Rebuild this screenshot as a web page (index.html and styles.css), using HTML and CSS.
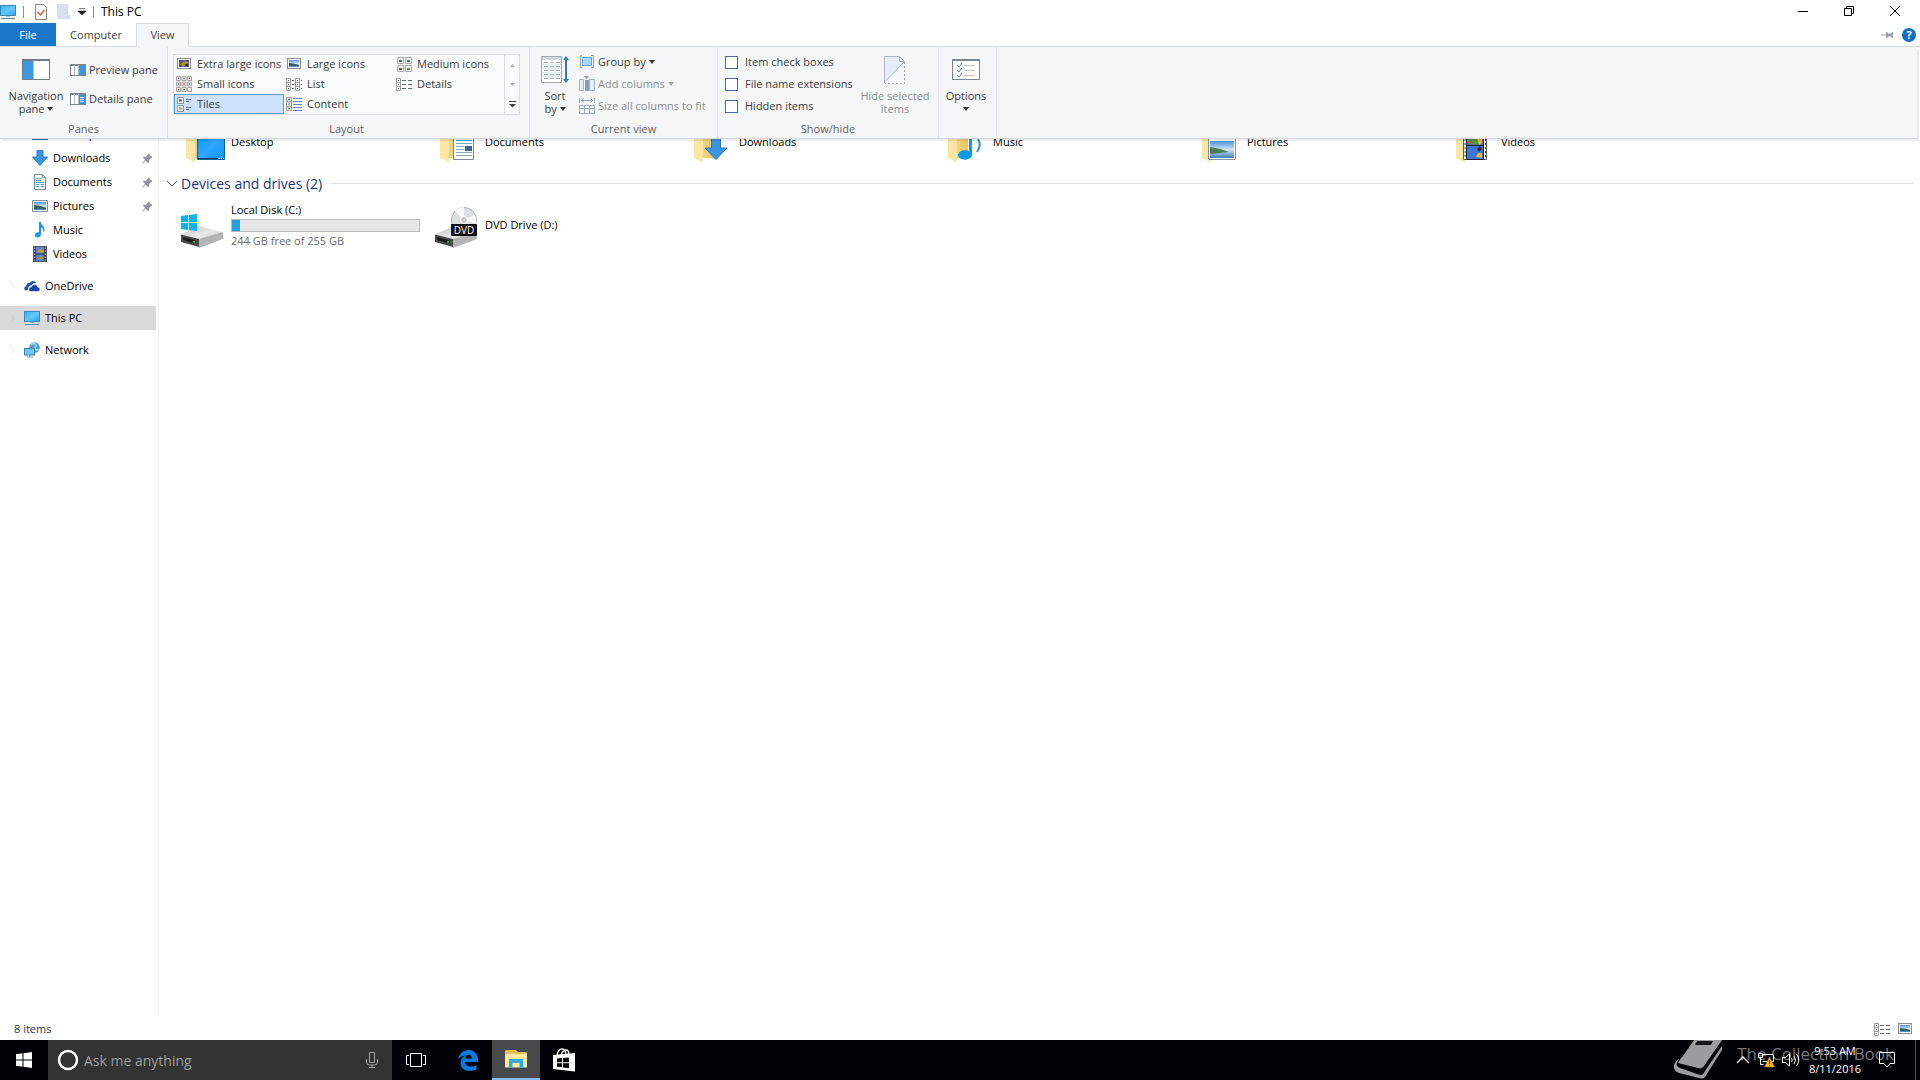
FILE: index.html
```html
<!DOCTYPE html>
<html lang="en">
<head>
<meta charset="utf-8">
<title>This PC</title>
<link rel="stylesheet" href="styles.css">
</head>
<body>
<svg class="defs" width="0" height="0" aria-hidden="true">
  <defs>
    <linearGradient id="g-screen" x1="0" y1="0" x2="1" y2="1"><stop offset="0" stop-color="#39b0f2"/><stop offset=".5" stop-color="#63c8fa"/><stop offset="1" stop-color="#2ba3ee"/></linearGradient>
    <linearGradient id="g-desk" x1="0" y1="0" x2="1" y2="1"><stop offset="0" stop-color="#0a93f8"/><stop offset=".5" stop-color="#2fa8fd"/><stop offset="1" stop-color="#0b90f5"/></linearGradient>
    <linearGradient id="g-fold" x1="0" y1="0" x2="1" y2="0"><stop offset="0" stop-color="#fbe29a"/><stop offset="1" stop-color="#e9c55f"/></linearGradient>
    <linearGradient id="g-sky" x1="0" y1="0" x2="0" y2="1"><stop offset="0" stop-color="#4a8fe0"/><stop offset=".5" stop-color="#cfe6f8"/><stop offset="1" stop-color="#3f7fb4"/></linearGradient>
    <linearGradient id="g-top" x1="0" y1="0" x2="1" y2="1"><stop offset="0" stop-color="#c4c4c4"/><stop offset=".5" stop-color="#e8e8e8"/><stop offset="1" stop-color="#c2c2c2"/></linearGradient>
    <symbol id="pc" viewBox="0 0 16 16"><rect x=".5" y="1.5" width="15" height="10" fill="url(#g-screen)" stroke="#3a86b5"/><path d="M6 12h4v1H6z" fill="#8ecdf0"/><path d="M1 14.5h14" stroke="#5d93b3"/></symbol>
    <symbol id="desk" viewBox="0 0 16 16"><rect x=".5" y="2.500" width="15" height="11" fill="#1a97ee" stroke="#1b6fb0"/></symbol>
    <symbol id="down" viewBox="0 0 16 16"><path d="M5 .5h6V7h4.500L8 15.500.5 7H5z" fill="#3c96e2" stroke="#2b7cc4"/></symbol>
    <symbol id="doc" viewBox="0 0 16 16"><path d="M2.500.5h8l3 3v12h-11z" fill="#fff" stroke="#7b8894"/><path d="M10.500.5v3h3" fill="none" stroke="#7b8894"/><path d="M4 4.500h2M7 4.500h2M4 6.500h5M4 8.500h8M4 10.500h3M9 10.500h3M4 12.500h3M9 12.500h3" stroke="#39a0d4"/></symbol>
    <symbol id="pic" viewBox="0 0 16 16"><rect x=".5" y="2.500" width="15" height="11" fill="#fff" stroke="#8b959c"/><path d="M2 4h12v8H2z" fill="url(#g-sky)"/><path d="M2 7q5 0 12 3v1H2z" fill="#35655f"/></symbol>
    <symbol id="music" viewBox="0 0 16 16"><path d="M7 0h2c0 3 4 4 3.500 8-.2 1.500-1 2-1.300 2.500C12 7.500 10.500 6 9 5.500V12c0 2-1.600 3.500-3.500 3.500S3 14.500 3 13c0-2 2-3.200 4-2.700z" fill="#1a97ea"/></symbol>
    <symbol id="film" viewBox="0 0 16 16"><rect x="1.500" y=".5" width="13" height="15" fill="#2d3140" stroke="#555a62"/><path d="M4 1h8v6.500H4z" fill="#6f7fd0"/><path d="M4 8.500h8V15H4z" fill="#5581cf"/><path d="M5 5l3-2 4 1v2l-4 1z" fill="#b8a03a"/><path d="M6 12l4-3 1 4-3 1z" fill="#a89038"/><path d="M2.800 1.500v13M13.200 1.500v13" stroke="#e6e6e6" stroke-dasharray="1.500 1.500"/></symbol>
    <symbol id="cloud" viewBox="0 0 16 16"><path d="M1.800 12.500C-.6 11.500.2 8.500 2.200 8.300 2 5.500 4.500 4.600 5.800 5.200 7.200 2.300 11 2.200 12 5 9 4.500 8 6.500 7.800 7.200 5.500 7 3.600 9 4.200 11.500z" fill="#1a4fae"/><path d="M6.400 13.500C4 13 4.200 9 7.300 9c1-3 5.500-3.500 6.300 0 3.200.2 3 4.300.4 4.500z" fill="#1447a0" stroke="#fff" stroke-width=".6"/></symbol>
    <symbol id="net" viewBox="0 0 16 16"><circle cx="10.500" cy="5.500" r="5.200" fill="#4f9cc8"/><path d="M7 3c2-2 4-2 5 0s-2 2-1 4 3 0 4 1" fill="none" stroke="#a9dcf2" stroke-width="1.500"/><rect x=".5" y="6.500" width="10" height="6.500" fill="#6cc7f5" stroke="#3b83ad"/><path d="M3 15h6M5.500 13v2" stroke="#5aa3c9"/></symbol>
    <symbol id="pin" viewBox="0 0 12 12"><path d="M7 .5L11.500 5l-1 .8-.8-.3L7.500 8l.2 2L6.500 11 4 8.500.5 11.500 0 11l3.300-3.500L1 5l1-1 2.200.2L6.500 2l-.3-.8z" fill="#8c959b"/></symbol>
    <symbol id="pane-r" viewBox="0 0 16 12"><rect x=".5" y=".5" width="15" height="11" fill="#fff" stroke="#7c868e"/><path d="M.5 1.500h15" stroke="#7c868e"/><path d="M9 2h6v9H9z" fill="#3d95df"/><path d="M4.500 1v10M8.500 1v10" stroke="#b4bac0"/></symbol>
    <symbol id="pane-d" viewBox="0 0 16 12"><rect x=".5" y=".5" width="15" height="11" fill="#fff" stroke="#7c868e"/><path d="M.5 1.500h15" stroke="#7c868e"/><path d="M9 2h6v9H9z" fill="#3d95df"/><path d="M10 4.500h4M10 6.500h4M10 8.500h4" stroke="#d6ebfb"/><path d="M4.500 1v10M8.500 1v10" stroke="#b4bac0"/></symbol>
    <symbol id="xl" viewBox="0 0 16 16"><rect x="1.500" y="2.500" width="13" height="10" fill="#fff" stroke="#8a8f94"/><path d="M3 4h10v7H3z" fill="#54508c"/><path d="M4 8l4-3 4 1v3l-5 2z" fill="#a49426"/><path d="M9 8h3v2H9z" fill="#31301d"/></symbol>
    <symbol id="lg" viewBox="0 0 16 16"><rect x="1.500" y="2.500" width="13" height="10" fill="#fff" stroke="#8a8f94"/><path d="M3 4h10v7H3z" fill="url(#g-sky)"/><path d="M3 7q4 0 10 2v1H3z" fill="#2f5f6f"/></symbol>
    <symbol id="md" viewBox="0 0 16 16"><path d="M1.500 1.500h6v6h-6zM9.500 1.500h6v6h-6zM1.500 9.500h6v6h-6zM9.500 9.500h6v6h-6z" fill="#fff" stroke="#a8a8ab"/><path d="M3 4h3v2H3z" fill="#43675f"/><path d="M11 4h3v2h-3z" fill="#49629b"/><path d="M3 12h3v2H3z" fill="#a4432f"/><path d="M11 12h3v2h-3z" fill="#888032"/></symbol>
    <symbol id="sm" viewBox="0 0 16 16"><path d="M.5.5h4v4h-4zM6 .5h4v4H6zM11.500.5h4v4h-4zM.5 6h4v4h-4zM6 6h4v4H6zM11.500 6h4v4h-4zM.5 11.500h4v4h-4zM6 11.500h4v4H6zM11.500 11.500h4v4h-4z" fill="#fff" stroke="#a5a19c"/><path d="M2 2h1v1H2zM7.500 2h1v1h-1zM2 7.500h1v1H2zM13 7.500h1v1h-1zM7.500 13h1v1h-1z" fill="#33566a" stroke="#33566a" stroke-width=".5"/><path d="M13 2h1v1h-1zM7.500 7.500h1v1h-1zM2 13h1v1H2z" fill="#b03a30" stroke="#b03a30" stroke-width=".5"/></symbol>
    <symbol id="list" viewBox="0 0 16 16"><path d="M.5 2.500h4v12h-4zM.5 6.500h4M.5 10.500h4M9.500 2.500h4v12h-4zM9.500 6.500h4M9.500 10.500h4" fill="#fff" stroke="#9b9b9b"/><path d="M2 4.500h1M2 8.500h1M2 12.500h1M6 4.500h2M6 8.500h2M6 12.500h2M11 4.500h1M11 8.500h1M11 12.500h1M15 4.500h1M15 8.500h1M15 12.500h1" stroke="#4b5f70"/></symbol>
    <symbol id="det" viewBox="0 0 16 16"><path d="M.5 2.500h4v12h-4zM.5 6.500h4M.5 10.500h4" fill="#fff" stroke="#9b9b9b"/><path d="M2 4.500h1M2 8.500h1M2 12.500h1M6 4.500h4M6 8.500h4M6 12.500h4M12 4.500h4M12 8.500h4M12 12.500h4" stroke="#5b6b7a"/></symbol>
    <symbol id="tile" viewBox="0 0 16 16"><path d="M1.500 1.500h6v6h-6zM1.500 9.500h6v6h-6z" fill="#fff" stroke="#90959b"/><path d="M3 3.500h3v2H3z" fill="#38627c"/><path d="M3 11.500h3v2H3z" fill="#a38d48"/><path d="M10 3.500h5M10 5.500h3M10 11.500h5M10 13.500h3" stroke="#5d7085"/></symbol>
    <symbol id="cont" viewBox="0 0 16 16"><path d="M.5 1.500h5v13h-5zM.5 5.500h5M.5 10.500h5" fill="#fff" stroke="#9b9b9b"/><path d="M2 3.500h2M2 8h2M2 12.500h2" stroke="#416054"/><path d="M7 2.500h9M7 5.500h9M7 8.500h9M7 11.500h9M7 14.500h9" stroke="#5d8ac2"/></symbol>
    <symbol id="fold" viewBox="0 0 48 48"><path d="M4 2h20v32H13z" fill="url(#g-fold)"/><path d="M4 2l9 5v31.500L4 34z" fill="#fbe5a2"/></symbol>
    <symbol id="drive" viewBox="0 0 48 48"><path d="M4 27.500L22 19l24 6-17 11z" fill="url(#g-top)"/><path d="M4 27.500L22 32v8L4 35z" fill="#4a4a4a"/><path d="M6 30l13 3.500v3L6 33z" fill="#1d1d1d"/><path d="M22 32l24-7v7l-24 9z" fill="#b4b4b4"/><path d="M16 34h2v1.500h-2z" fill="#48d152"/></symbol>
  </defs>
</svg>
<div class="screen">
  <main class="window">
    <header class="titlebar">
      <div class="quick">
        <svg class="i16"><use href="#pc"/></svg>
        <span class="bar"></span>
        <button class="plain q1" aria-label="Properties"><svg width="12" height="16" viewBox="0 0 12 16"><path d="M.5.5h8l3 3v12H.5z" fill="#fff" stroke="#8d8580"/><path d="M2.500 8l3 3L9.500 6" fill="none" stroke="#dc5a28" stroke-width="1.500"/></svg></button>
        <button class="plain q2" aria-label="New folder"><svg width="13" height="16" viewBox="0 0 13 16"><path d="M0 0h11v11h2v4H0z" fill="#d5dff0"/></svg></button>
        <button class="plain q3" aria-label="Customize toolbar"><svg width="8" height="8" viewBox="0 0 8 8"><path d="M1 .5h6M0 3h8L4 7z" fill="#222" stroke="#222" stroke-width=".6"/></svg></button>
        <span class="bar"></span>
      </div>
      <h1>This PC</h1>
      <div class="caption">
        <button class="plain" aria-label="Minimize"><svg width="10" height="10"><path d="M0 5.500h10" stroke="#000"/></svg></button>
        <button class="plain" aria-label="Restore"><svg width="10" height="10" fill="none" stroke="#000"><path d="M.5 2.500h7v7h-7zM2.500 2V.5h7v7H8"/></svg></button>
        <button class="plain" aria-label="Close"><svg width="10" height="10"><path d="M0 0l10 10M10 0L0 10" stroke="#000"/></svg></button>
      </div>
    </header>
    <nav class="tabs">
      <button class="tab file">File</button>
      <button class="tab computer">Computer</button>
      <button class="tab view">View</button>
      <div class="tabtools">
        <button class="plain" aria-label="Pin the ribbon"><svg width="12" height="8" viewBox="0 0 12 8"><path d="M0 4h5" stroke="#9aa0a5"/><path d="M5 1h1l1 1.500h3L11 1h1v6h-1l-1-1.500H7L6 7H5z" fill="#9aa0a5"/></svg></button>
        <button class="plain help" aria-label="Help">?</button>
      </div>
    </nav>

    <section class="ribbon" aria-label="View">
      <div class="group panes">
        <div class="tools">
          <button class="big"><svg width="28" height="21" viewBox="0 0 28 21"><rect x=".5" y=".5" width="27" height="20" fill="#fff" stroke="#727d85"/><path d="M1 2h10v18H1z" fill="#3c97e0"/><path d="M0 1.500h28" stroke="#727d85"/><path d="M11.500 2v18" stroke="#a9c3d6"/></svg><span>Navigation<br>pane <i class="arr"></i></span></button>
          <div class="stack">
            <button class="small"><svg width="16" height="12"><use href="#pane-r"/></svg>Preview pane</button>
            <button class="small"><svg width="16" height="12"><use href="#pane-d"/></svg>Details pane</button>
          </div>
        </div>
        <h2>Panes</h2>
      </div>
      <div class="group layout">
        <div class="tools">
          <div class="gallery">
            <div class="options">
              <button><svg class="i16"><use href="#xl"/></svg>Extra large icons</button>
              <button><svg class="i16"><use href="#lg"/></svg>Large icons</button>
              <button><svg class="i16"><use href="#md"/></svg>Medium icons</button>
              <button><svg class="i16"><use href="#sm"/></svg>Small icons</button>
              <button><svg class="i16"><use href="#list"/></svg>List</button>
              <button><svg class="i16"><use href="#det"/></svg>Details</button>
              <button class="on"><svg class="i16"><use href="#tile"/></svg>Tiles</button>
              <button><svg class="i16"><use href="#cont"/></svg>Content</button>
            </div>
            <div class="spin">
              <button aria-label="Up"><svg width="7" height="4"><path d="M1 4h5L3.500 1z" fill="#a9adb2"/></svg></button>
              <button aria-label="Down"><svg width="7" height="4"><path d="M1 0h5L3.500 3z" fill="#a9adb2"/></svg></button>
              <button aria-label="More"><svg width="7" height="7"><path d="M0 0h7v1H0zM0 3h7L3.500 6.500z" fill="#444"/></svg></button>
            </div>
          </div>
        </div>
        <h2>Layout</h2>
      </div>
      <div class="group current">
        <div class="tools">
          <button class="big"><svg width="28" height="28" viewBox="0 0 28 28"><path d="M.5.5h20v26H.5z" fill="#fff" stroke="#a0a7ad"/><path d="M1 1h19v3H1z" fill="#cfd8e0"/><path d="M3 6.500h16M3 10.500h16M3 14.500h16M3 18.500h16M3 22.500h16" stroke="#9aa7b3" stroke-dasharray="4 2"/><path d="M1 8.500h19M1 12.500h19M1 16.500h19M1 20.500h19" stroke="#dde9f2"/><path d="M25 3v21" stroke="#2f7db8" stroke-width="2"/><path d="M22 4l3-4 3 4zM22 23l3 4 3-4z" fill="#2f7db8"/></svg><span>Sort<br>by <i class="arr"></i></span></button>
          <div class="stack">
            <button class="small"><svg width="16" height="16"><path d="M3 1.500H1.500v12H3M12 1.500h2.500v12H12" fill="none" stroke="#9aa0a6"/><path d="M3.500 3.500h9v8h-9z" fill="#a7d8f8" stroke="#62a6d6"/></svg>Group by <i class="arr"></i></button>
            <button class="small" disabled><svg width="16" height="16"><path d="M.5 3.500h4v11h-4zM10.500 3.500h5v11h-5z" fill="#e7edf7" stroke="#a3b0cb"/><path d="M6 4h4v11H6z" fill="#8b99b3"/><path d="M5 0h5L7.500 3z" fill="#8b99b3"/></svg>Add columns <i class="arr"></i></button>
            <button class="small" disabled><svg width="16" height="16" fill="none" stroke="#9aa8c6"><path d="M.5 0v5M15.500 0v5M2 2.500h12M4.500.5l-2 2 2 2M11.500.5l2 2-2 2M.5 7.500h15v8H.5zM.5 10.500h15M5.500 8v7M10.500 8v7"/></svg>Size all columns to fit</button>
          </div>
        </div>
        <h2>Current view</h2>
      </div>
      <div class="group show">
        <div class="tools">
          <div class="stack">
            <label><input type="checkbox">Item check boxes</label>
            <label><input type="checkbox">File name extensions</label>
            <label><input type="checkbox">Hidden items</label>
          </div>
          <button class="big" disabled><svg width="22" height="28" viewBox="0 0 22 28"><path d="M.5.5h15l5 5v1L1 26.500H.5z" fill="#e6edf8"/><path d="M.5 27V.5h15l5 5L.5 26M15.500.5v5h5" fill="none" stroke="#a9b6d1"/><path d="M20.500 6v21.500H1" fill="none" stroke="#9faabf" stroke-dasharray="2 2"/></svg><span>Hide selected<br>items</span></button>
        </div>
        <h2>Show/hide</h2>
      </div>
      <div class="group opts">
        <div class="tools">
          <button class="big"><svg width="28" height="21" viewBox="0 0 28 21"><rect x=".5" y=".5" width="27" height="20" fill="#fff" stroke="#7c868e"/><path d="M0 1.500h28" stroke="#7c868e"/><path d="M5 6l2 2 3-4M5 11l2 2 3-4M5 16l2 2 3-4" fill="none" stroke="#4a86c8"/><path d="M12 6.500h11M12 11.500h11M12 16.500h11" stroke="#c9c4bd"/></svg><span>Options<br><i class="arr"></i></span></button>
        </div>
      </div>
    </section>

    <div class="explorer">
      <nav class="side">
        <a class="sub" href="#desktop"><svg class="i16"><use href="#desk"/></svg>Desktop</a>
        <a class="sub" href="#downloads"><svg class="i16"><use href="#down"/></svg>Downloads<svg class="pin"><use href="#pin"/></svg></a>
        <a class="sub" href="#documents"><svg class="i16"><use href="#doc"/></svg>Documents<svg class="pin"><use href="#pin"/></svg></a>
        <a class="sub" href="#pictures"><svg class="i16"><use href="#pic"/></svg>Pictures<svg class="pin"><use href="#pin"/></svg></a>
        <a class="sub" href="#music"><svg class="i16"><use href="#music"/></svg>Music</a>
        <a class="sub" href="#videos"><svg class="i16"><use href="#film"/></svg>Videos</a>
        <a class="root" href="#onedrive"><svg class="exp"><path d="M1 1l3 3-3 3"/></svg><svg class="i16"><use href="#cloud"/></svg>OneDrive</a>
        <a class="root here" href="#thispc"><svg class="exp"><path d="M1 1l3 3-3 3"/></svg><svg class="i16"><use href="#pc"/></svg>This PC</a>
        <a class="root" href="#network"><svg class="exp"><path d="M1 1l3 3-3 3"/></svg><svg class="i16"><use href="#net"/></svg>Network</a>
      </nav>
      <section class="files">
        <div class="tiles">
          <a class="tile" href="#f1"><svg class="i48"><use href="#fold" x="5"/><path d="M20.500 10.500h27v25h-27z" fill="url(#g-desk)" stroke="#0d5f9e"/><path d="M21 34.500h20" stroke="#123f66"/><path d="M42 34.500h5" stroke="#fff" stroke-dasharray="1 1"/></svg>Desktop</a>
          <a class="tile" href="#f2"><svg class="i48"><use href="#fold" x="5"/><path d="M22.500 4.500h20v31h-20z" fill="#fff" stroke="#7d8790"/><path d="M25 16.500h16" stroke="#2e9fd4"/><path d="M25 19.500h16M25 22.500h8M25 25.500h8M25 28.500h16M25 31.500h16" stroke="#84a9bd"/><path d="M34 22h7v5h-7z" fill="#37668c"/></svg>Documents</a>
          <a class="tile" href="#f3"><svg class="i48"><use href="#fold" x="5"/><path d="M26.500 8.500h9V24H42L31 35.500 20 24h6.500z" fill="#3a95e4" stroke="#2a78c0"/></svg>Downloads</a>
          <a class="tile" href="#f4"><svg class="i48"><use href="#fold" x="5"/><ellipse cx="26" cy="31" rx="7" ry="4.700" fill="#0b9ae8"/><path d="M31.500 6v25" stroke="#0b9ae8" stroke-width="3"/><path d="M39 15q4 6-1 13" fill="none" stroke="#2b97d0" stroke-width="2"/></svg>Music</a>
          <a class="tile" href="#f5"><svg class="i48"><use href="#fold" x="5"/><path d="M15.500 14.500h27v21h-27z" fill="#fff" stroke="#82949f"/><path d="M17 17h24v17H17z" fill="url(#g-sky)"/><path d="M17 23q10 1 19 5l-19 2z" fill="#4b7f55"/></svg>Pictures</a>
          <a class="tile" href="#f6"><svg class="i48"><use href="#fold" x="5"/><path d="M16.500 6.500h23v29h-23z" fill="#fff" stroke="#5a5a5a"/><path d="M19 6h18v30H19z" fill="#20242e"/><path d="M20 6h16v15H20z" fill="#5a67b8"/><path d="M20 22h16v13H20z" fill="#3f75da"/><path d="M20 16l5-3 5 2 5-2v6l-8 2-7-2z" fill="#4e9a3e"/><path d="M21 19l3-3 2 3z" fill="#e23d5a"/><path d="M30 14h5v5l-3 2z" fill="#e4bb20"/><path d="M30 25l3-3 2 3-3 3z" fill="#3a2618"/><path d="M29 33l2-4h4v5z" fill="#e9b71e"/><path d="M18 7v28M38.500 7v28" stroke="#444" stroke-dasharray="2 2"/></svg>Videos</a>
        </div>
        <h2 class="section"><svg width="12" height="8"><path d="M1 1l5 5 5-5" fill="none" stroke="#6b6b6b"/></svg>Devices and drives (2)</h2>
        <div class="tiles">
          <a class="tile" href="#c"><svg class="i48"><use href="#drive"/><path d="M4 9l7-1v7H4zM12 8l8-1v8h-8zM4 16h7v7l-7-1zM12 16h8v8l-8-1z" fill="#00b4ef"/></svg><span class="info"><span>Local Disk (C:)</span><span class="meter"><span class="used" style="width:4.3%"></span></span><span class="free">244 GB free of 255 GB</span></span></a>
          <a class="tile" href="#d"><svg class="i48"><use href="#drive"/><circle cx="33" cy="13" r="12.500" fill="#dcdfdf" stroke="#a8aaaa"/><path d="M33 13L24 4q4-4 9-4zM33 13l11-5q2 4 1 9z" fill="#f7f9f9"/><circle cx="33" cy="13" r="3.500" fill="#c9cbcb" stroke="#fff"/><rect x="20" y="17" width="26" height="12" rx="1" fill="#111"/><text x="33" y="27" text-anchor="middle" class="dvd">DVD</text></svg>DVD Drive (D:)</a>
        </div>
      </section>
    </div>
    <footer class="status"><span>8 items</span>
      <div class="modes">
        <button class="plain" aria-label="Details view"><svg class="i16"><use href="#det"/></svg></button>
        <button class="plain" aria-label="Large icons view"><svg class="i16"><use href="#lg"/></svg></button>
      </div>
    </footer>
  </main>

  <div class="taskbar">
    <button class="task" aria-label="Start"><svg width="16" height="16"><path d="M0 2.300L6.500 1.300v6.200H0zM7.500 1.200L16 0v7.500H7.500zM0 8.500h6.500v6.200L0 13.700zM7.500 8.500H16V16l-8.500-1.200z" fill="#fff"/></svg></button>
    <label class="search"><svg width="22" height="22"><circle cx="11" cy="11" r="9" fill="none" stroke="#fff" stroke-width="2.500"/></svg><input type="text" placeholder="Ask me anything" aria-label="Search"><svg width="12" height="16" fill="none" stroke="#a5a5a5"><path d="M3.500.5h5v10h-5zM.5 7v3q0 3 3 3h5q3 0 3-3V7M6 13v2.500M3 15.500h6"/></svg></label>
    <button class="task tview" aria-label="Task view"><svg width="20" height="14" fill="none" stroke="#fff"><path d="M4.500.5h11v13h-11zM3 2.500H.5v9H3M17 2.500h2.500v9H17"/></svg></button>
    <button class="task" aria-label="Edge"><svg width="20" height="21" viewBox="0 0 20 21"><path d="M0 9.500C1 4 5 0 10.500 0 16.500 0 20 4.500 20 9.500V12H7c.2 3 3 4.600 6 4.600 2.200 0 4-.6 5.600-1.600v4.300C17 20.300 14.500 21 12 21 6.500 21 2.600 17.800 2.600 13c0-3.300 1.800-6 4.800-7.500C4.500 5.700 1.800 7 0 9.500zM7.200 8.400h6.600c0-2.300-1.100-3.600-3.100-3.600-2 0-3.200 1.500-3.500 3.600z" fill="#0a7bdc"/></svg></button>
    <button class="task active" aria-label="File Explorer"><svg width="22" height="18"><path d="M0 1q0-1 1-1h10l2 2h8q1 0 1 1v14H0z" fill="#e4bd57"/><path d="M0 4h22v13.500H0z" fill="#fde9a1"/><path d="M4 18V9h14v9h-3.500v-5h-7v5z" fill="#36a9dc"/></svg></button>
    <button class="task" aria-label="Store"><svg width="22" height="24"><path d="M4 7.500Q5 1 9 1t4 6M8 7q2-5 5-5t3 5" fill="none" stroke="#fff" stroke-width="1.300"/><path d="M0 7l22-2v18.500L0 21z" fill="#fff"/><path d="M4 10.500l5-.4v4.200H4zM10 10l6-.6v4.900h-6zM4 15.300h5v4l-5-.5zM10 15.300h6v4.900l-6-.7z" fill="#05060a"/></svg></button>
    <div class="tray">
      <svg width="14" height="10" fill="none" stroke="#fff" stroke-width="1.300"><path d="M1 8l6-6 6 6"/></svg>
      <svg width="18" height="16"><path d="M5.500 2.500h11v7h-11M11 10v3M1.500 1.500h4v4h-4zM3.500 6v6.500h3" fill="none" stroke="#fff"/><path d="M12.500 5L17.500 15h-10z" fill="#fcb716" stroke="#d18a00" stroke-width=".5"/><path d="M12.500 8v4M12.500 13v1" stroke="#222"/></svg>
      <svg width="18" height="14" fill="none" stroke="#fff"><path d="M.5 4.500h3L7.500 1v12L3.500 9.500h-3zM9.500 5q1.500 2 0 4M12 3q3 4 0 8M14.500 1q4.500 6 0 12"/></svg>
      <time>9:53 AM<br>8/11/2016</time>
      <svg class="action" width="16" height="16" fill="none" stroke="#fff"><path d="M.5.5h15v11H11L8 15l-3-3.500H.5z"/></svg>
    </div>
    <div class="peek"></div>
    <div class="mark"><svg width="50" height="40" viewBox="0 0 50 40"><path d="M20 0h28l-18 26q-2 3-5 2.300L4 23q2-4 5-7z" fill="#9b9ca0"/><path d="M23 1h16l-2 4H21z" fill="#15161a"/><path d="M5 19q-5 7 1 9l20 7q2 .5 3-1L48 6v4L31 37q-1 2-4 1.500L5 33q-6-2-5-8 2-5 5-6z" fill="#9b9ca0"/></svg><span>The Collection Book</span></div>
  </div>
</div>
</body>
</html>
```
FILE: styles.css
```css
* { box-sizing: border-box; }
body {
  margin: 0;
  font: 11px/16px "Open Sans", "Noto Sans", sans-serif;
  color: #000;
  background: #fff;
  overflow: hidden;
}
button { font: inherit; color: inherit; background: none; border: 0; padding: 0; margin: 0; }
a { color: inherit; text-decoration: none; }
h1, h2 { margin: 0; font-weight: 400; }
svg { flex: none; display: block; }
.defs { position: absolute; }
.i16 { width: 16px; height: 16px; }
.i48 { width: 48px; height: 48px; }
.plain { display: grid; place-items: center; }

.screen { display: flex; flex-direction: column; height: 100vh; }
.window { position: relative; flex: 1; min-height: 0; display: flex; flex-direction: column; }

.titlebar { display: flex; height: 23px; align-items: center; }
.quick { display: flex; align-items: center; }
.bar { width: 1px; height: 12px; background: #8f8f8f; margin: 0 11px 0 7px; }
.q1 { margin-right: 10px; }
.q2 { margin-right: 8px; }
.quick .bar:last-child { margin-right: 7px; }
.titlebar h1 { font-size: 12px; }
.caption { margin-left: auto; align-self: stretch; display: flex; padding-right: 2px; }
.caption button { width: 46px; padding-bottom: 2px; }

.tabs { display: flex; height: 24px; border-bottom: 1px solid #d9dce0; color: #444; }
.tab { height: 24px; text-align: center; padding-bottom: 1px; }
.file { width: 56px; height: 23px; background: #1976c8; color: #fff; padding: 0; }
.computer { width: 80px; }
.view { width: 53px; border: 1px solid #d9dce0; border-bottom: 0; background: #f4f6f8; padding-bottom: 2px; }
.tabtools { margin-left: auto; display: flex; align-items: center; gap: 9px; padding-right: 4px; }
.help { width: 14px; height: 14px; border-radius: 50%; background: #0f6fc6; color: #fff; font-weight: 700; line-height: 14px; }

/* The ribbon drops down over the folder view */
.ribbon {
  position: absolute; top: 47px; left: 0; right: 3px; z-index: 2;
  display: flex; height: 92px;
  background: #f4f6f8; border-bottom: 1px solid #d5d8dc;
  box-shadow: 2px 2px 0 rgba(0, 0, 0, .08);
  color: #3c3c3c;
}
.group { display: flex; flex-direction: column; border-right: 1px solid #e1e4e7; }
.tools { flex: 1; display: flex; align-items: flex-start; padding-top: 4px; }
.group h2 { font-size: 11px; line-height: 18px; text-align: center; color: #5f5f5f; }
.panes { width: 168px; }
.layout { width: 362px; padding: 0 9px 0 5px; }
.current { width: 188px; }
.show { width: 221px; }
.opts { width: 58px; }
.big { width: 64px; display: flex; flex-direction: column; align-items: center; line-height: 13px; padding-top: 2px; }
.big svg[height="21"] { margin: 6px 0 9px; }
.big svg[height="28"] { margin: 3px 0 5px; }
.panes .big { margin: 0 2px 0 4px; }
.current .big { width: 40px; margin: 0 4px 0 5px; }
.show .big { width: 76px; }
.opts .big { width: 54px; }
.arr { display: inline-block; border: 3px solid transparent; border-top: 4px solid #333; border-bottom: 0; vertical-align: 2px; }
.small { display: flex; align-items: center; gap: 3px; height: 22px; white-space: nowrap; }
.panes .stack { padding-top: 4px; }
.panes .small { height: 29px; }
button:disabled { color: #8f8f8f; }
button:disabled .arr { border-top-color: #a5a5a5; }
.gallery { display: flex; margin-top: 3px; width: 347px; height: 61px; border: 1px solid #dcdfe2; background: #f9fafb; }
.options { flex: 1; display: grid; grid-template-columns: repeat(3, 110px); grid-template-rows: 18px 21px 20px; align-items: stretch; }
.options button { display: flex; align-items: center; gap: 5px; padding-left: 2px; white-space: nowrap; }
.options .on { background: #cce2fb; outline: 1px solid #5e9ad8; outline-offset: -1px; }
.spin { width: 15px; border-left: 1px solid #dcdfe2; display: grid; grid-template-rows: 20px 20px 1fr; }
.spin button { display: grid; place-items: center; }
.show .stack { padding-left: 7px; width: 139px; }
.show label { display: flex; align-items: center; gap: 7px; height: 22px; white-space: nowrap; }
.show input { appearance: none; margin: 0; width: 13px; height: 13px; border: 1px solid #52689c; background: #fff; }

.explorer { flex: 1; min-height: 0; display: flex; }
.side { width: 159px; padding: 75px 2px 0 0; border-right: 1px solid #eff1f3; }
.side a { display: flex; align-items: center; height: 24px; gap: 5px; }
.side .sub { padding: 0 3px 0 32px; }
.side .root { margin-top: 8px; padding-left: 10px; }
.side .here { background: #d9d9d9; }
.pin { width: 11px; height: 11px; margin-left: auto; }
.exp { width: 5px; height: 8px; margin-right: 4px; fill: none; stroke: #e9e9e9; }
.here .exp { stroke: #cbcbcb; }
.files { flex: 1; min-width: 0; padding: 66px 7px 0 7px; }
.tiles { display: grid; grid-template-columns: repeat(auto-fill, 254px); padding-left: 11px; }
.tile { display: flex; align-items: center; gap: 6px; height: 58px; }
.tile .i48 { margin-top: 12px; }
.info { display: flex; flex-direction: column; width: 189px; }
.meter { height: 13px; border: 1px solid #bcbcbc; background: #e6e6e6; margin: 1px 0; }
.used { display: block; height: 100%; background: #26a0da; }
.free { color: #6d6d6d; }
.section { display: flex; align-items: center; gap: 4px; height: 25px; font-size: 14px; color: #1e3287; }
.section svg { margin-right: -1px; }
.section::after { content: ""; flex: 1; height: 1px; background: #e2e2e2; margin-left: 4px; }
.dvd { font: 10px "Open Sans", sans-serif; fill: #fff; }

.status { height: 24px; display: flex; align-items: center; justify-content: space-between; padding: 1px 7px 0 14px; color: #1e395b; }
.modes { display: flex; gap: 7px; }

.taskbar { position: relative; height: 40px; display: flex; background: #010308; color: #fff; }
.task { width: 48px; display: grid; place-items: center; }
.tview { margin-right: 4px; }
.active { background: #47494d; border-bottom: 2px solid #83b9e8; }
.search { width: 344px; background: #333; display: flex; align-items: center; padding: 0 14px 0 9px; gap: 5px; }
.search input { flex: 1; min-width: 0; border: 0; padding: 2px 0 0; background: none; color: #fff; font: 14px/20px "Open Sans", sans-serif; }
.search input::placeholder { color: #9d9d9d; opacity: 1; }
.tray { position: relative; z-index: 1; margin-left: auto; display: flex; align-items: center; gap: 7px; }
.tray time { width: 54px; margin-left: 1px; text-align: center; line-height: 18px; }
.action { margin: 0 20px 0 10px; }
.peek { width: 5px; border-left: 1px solid #4c4d50; }
/* Watermark laid over the taskbar */
.mark { position: absolute; right: 26px; top: 0; display: flex; color: #77787c; font-size: 17px; line-height: 28px; gap: 13px; pointer-events: none; }
```
